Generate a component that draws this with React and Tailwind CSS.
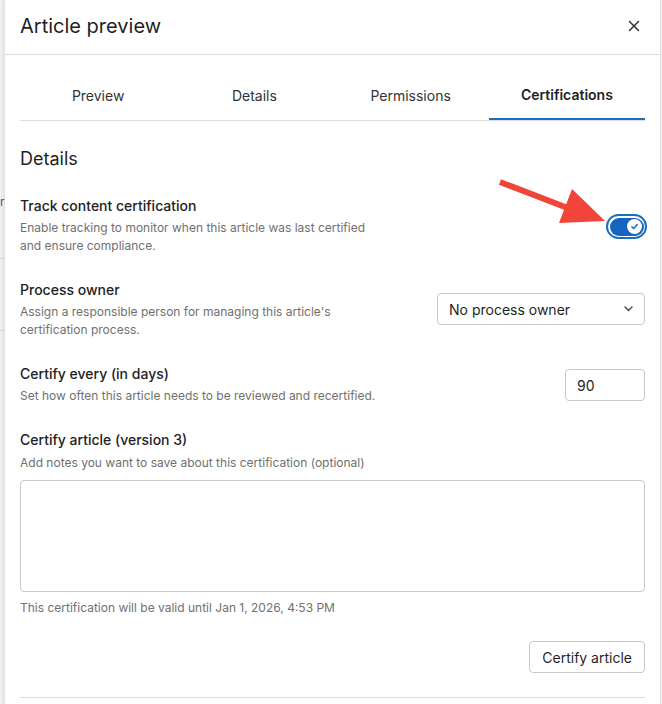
import React from "react";

const TABS = ["Preview", "Details", "Permissions", "Certifications"];

const Toggle = () => (
  <span className="inline-flex items-center rounded-full border-2 border-[#1a6cc4] p-[1.5px] bg-white">
    <span className="flex h-[18px] w-[34px] items-center justify-end rounded-full bg-[#1565c0] pr-[2px]">
      <span className="flex h-[15px] w-[15px] items-center justify-center rounded-full bg-white">
        <svg width="9" height="9" viewBox="0 0 10 10" fill="none">
          <path d="M2 5.2 4.1 7.2 8 2.8" stroke="#1565c0" strokeWidth="1.6" strokeLinecap="round" strokeLinejoin="round" />
        </svg>
      </span>
    </span>
  </span>
);

const Row = ({ title, desc, children }) => (
  <div className="flex items-start justify-between">
    <div className="w-[362px]">
      <p className="text-[14px] leading-[20px] font-medium text-[#222]">{title}</p>
      <p className="mt-[3px] text-[12px] leading-[18px] text-[#707070]">{desc}</p>
    </div>
    {children}
  </div>
);

const App = () => {
  return (
    <div
      className="relative flex h-[704px] w-[662px] overflow-hidden bg-[#f2f2f2]"
      style={{ fontFamily: "Inter, 'Noto Sans', sans-serif" }}
    >
      {/* what shows behind the panel */}
      <div className="relative w-[4px] shrink-0">
        <span className="absolute left-0 top-[196px] text-[12px] leading-none text-[#555]">r</span>
        <div className="absolute left-0 top-[258px] h-px w-[4px] bg-[#d6d6d6]" />
        <div className="absolute left-0 top-[330px] h-px w-[4px] bg-[#d6d6d6]" />
      </div>

      <div className="flex h-full w-[657px] shrink-0 flex-col border-x border-[#e0e0e0] bg-white shadow-[-2px_0_4px_rgba(0,0,0,0.06)]">
        <div className="flex h-[55px] shrink-0 items-center justify-between border-b border-[#dcdcdc] pb-[3px] pl-[15px] pr-[20px]">
          <h1 className="text-[20px] font-normal text-[#1f1f1f]">Article preview</h1>
          <svg width="12" height="12" viewBox="0 0 12 12" fill="none" className="mt-[1px]">
            <path d="M1.5 1.5 10.5 10.5M10.5 1.5 1.5 10.5" stroke="#333" strokeWidth="1.5" strokeLinecap="round" />
          </svg>
        </div>

        <div className="px-[15px]">
          <div className="mt-[17px] flex border-b border-[#dcdcdc]">
            {TABS.map((t) => (
              <div
                key={t}
                className={
                  t === "Certifications"
                    ? "flex h-[48px] flex-1 items-center justify-center border-b-2 border-[#1a6cc4] mb-[-1px] pb-[1px] text-[14px] font-semibold text-[#1f1f1f]"
                    : "flex h-[48px] flex-1 items-center justify-center pb-[1px] text-[14px] text-[#333]"
                }
              >
                {t}
              </div>
            ))}
          </div>

          <h2 className="mt-[24px] text-[18px] leading-[28px] text-[#1f1f1f]">Details</h2>

          <div className="mt-[23px]">
            <Row
              title="Track content certification"
              desc="Enable tracking to monitor when this article was last certified and ensure compliance."
            >
              <div className="mr-[-2px] mt-[17px]">
                <Toggle />
              </div>
            </Row>
          </div>

          <div className="mt-[25px]">
            <Row
              title="Process owner"
              desc="Assign a responsible person for managing this article's certification process."
            >
              <div className="mt-[13px] flex h-[32px] w-[208px] items-center justify-between rounded-[4px] border border-[#c9c9c9] pl-[11px] pr-[11px] text-[14px] text-[#1f1f1f]">
                <span>No process owner</span>
                <svg width="9" height="6" viewBox="0 0 9 6" fill="none">
                  <path d="M1 1 4.5 4.5 8 1" stroke="#444" strokeWidth="1.4" strokeLinecap="round" strokeLinejoin="round" />
                </svg>
              </div>
            </Row>
          </div>

          <div className="mt-[25px]">
            <Row
              title="Certify every (in days)"
              desc="Set how often this article needs to be reviewed and recertified."
            >
              <div className="mt-[5px] flex h-[32px] w-[80px] items-center rounded-[4px] border border-[#c9c9c9] pl-[11px] text-[14px] text-[#1f1f1f]">
                90
              </div>
            </Row>
          </div>

          <div className="mt-[25px]">
            <p className="text-[14px] leading-[20px] font-medium text-[#222]">Certify article (version 3)</p>
            <p className="mt-[4px] text-[12px] leading-[18px] text-[#707070]">
              Add notes you want to save about this certification (optional)
            </p>
            <div className="mt-[8px] h-[112px] rounded-[4px] border border-[#c9c9c9]" />
            <p className="mt-[7px] text-[12px] leading-[18px] text-[#707070]">
              This certification will be valid until Jan 1, 2026, 4:53 PM
            </p>
          </div>

          <div className="mt-[24px] flex justify-end">
            <button className="h-[32px] rounded-[4px] border border-[#c9c9c9] px-[12px] text-[14px] text-[#1f1f1f]">
              Certify article
            </button>
          </div>

          <div className="mt-[24px] border-t border-[#dcdcdc]" />
        </div>
      </div>

      <svg className="pointer-events-none absolute left-0 top-0" width="662" height="704">
        <line x1="500" y1="182" x2="578" y2="212" stroke="#f2453a" strokeWidth="6" />
        <polygon points="572,189 559,223 605,221" fill="#f2453a" />
      </svg>
    </div>
  );
};

export default App;
